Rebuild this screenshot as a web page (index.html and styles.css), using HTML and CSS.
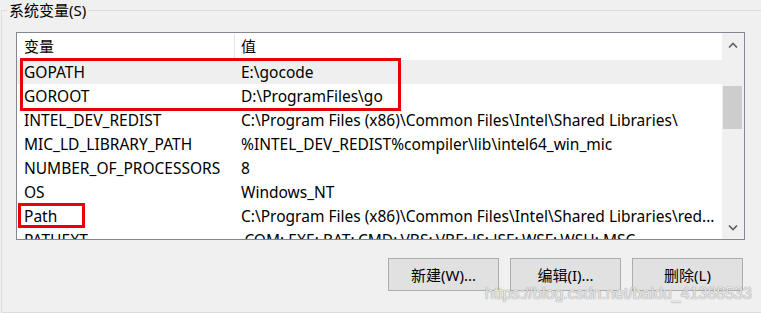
FILE: index.html
```html
<!DOCTYPE html>
<html lang="zh-CN">
<head>
    <meta charset="UTF-8">
    <meta name="viewport" content="width=device-width, initial-scale=1.0">
    <title>系统变量</title>
    <link rel="stylesheet" href="styles.css">
</head>
<body>
    <fieldset class="group">
        <legend>系统变量(S)</legend>

        <div class="listbox">
            <div class="list-main">
                <div class="row head">
                    <div class="cell name">变量</div>
                    <div class="cell value">值</div>
                </div>
                <div class="row selected">
                    <div class="cell name">GOPATH</div>
                    <div class="cell value">E:\gocode</div>
                </div>
                <div class="row">
                    <div class="cell name">GOROOT</div>
                    <div class="cell value">D:\ProgramFiles\go</div>
                </div>
                <div class="row">
                    <div class="cell name">INTEL_DEV_REDIST</div>
                    <div class="cell value">C:\Program Files (x86)\Common Files\Intel\Shared Libraries\</div>
                </div>
                <div class="row">
                    <div class="cell name">MIC_LD_LIBRARY_PATH</div>
                    <div class="cell value">%INTEL_DEV_REDIST%compiler\lib\intel64_win_mic</div>
                </div>
                <div class="row">
                    <div class="cell name">NUMBER_OF_PROCESSORS</div>
                    <div class="cell value">8</div>
                </div>
                <div class="row">
                    <div class="cell name">OS</div>
                    <div class="cell value">Windows_NT</div>
                </div>
                <div class="row">
                    <div class="cell name">Path</div>
                    <div class="cell value">C:\Program Files (x86)\Common Files\Intel\Shared Libraries\red...</div>
                </div>
                <div class="row">
                    <div class="cell name">PATHEXT</div>
                    <div class="cell value">.COM;.EXE;.BAT;.CMD;.VBS;.VBE;.JS;.JSE;.WSF;.WSH;.MSC</div>
                </div>
            </div>

            <div class="scrollbar">
                <div class="arrow">
                    <svg width="10" height="6" viewBox="0 0 10 6"><path d="M1 5.5 L5 1.5 L9 5.5" fill="none" stroke="#606060" stroke-width="1.6"/></svg>
                </div>
                <div class="track"><div class="thumb"></div></div>
                <div class="arrow">
                    <svg width="10" height="6" viewBox="0 0 10 6"><path d="M1 0.5 L5 4.5 L9 0.5" fill="none" stroke="#606060" stroke-width="1.6"/></svg>
                </div>
            </div>

            <div class="mark mark-go"></div>
            <div class="mark mark-path"></div>
        </div>

        <div class="buttons">
            <button>新建(W)...</button>
            <button>编辑(I)...</button>
            <button>删除(L)</button>
        </div>
    </fieldset>

    <div class="watermark">https://blog.csdn.net/baidu_41388533</div>
</body>
</html>
```

FILE: styles.css
```css
body {
    margin: 0;
    height: 313px;
    overflow: hidden;
    background: #f0f0f0;
    font-family: "Noto Sans", "Noto Sans CJK SC", sans-serif;
    font-size: 15px;
    color: #000;
    position: relative;
}
.group {
    margin: 0 -2px 0 1px;
    padding: 12px 17px 20px 14px;
    border: 1px solid #dcdcdc;
    height: 313px;
    box-sizing: border-box;
}
.group legend {
    margin-left: -9px;
    padding: 0 2px;
    line-height: 20px;
}
.listbox {
    position: relative;
    display: flex;
    height: 206px;
    border: 1px solid #828790;
    background: #fff;
}
.list-main {
    flex: 1;
    overflow: hidden;
    font-size: 15.5px;
}
.row {
    display: grid;
    grid-template-columns: 218px 1fr;
    height: 24px;
    line-height: 24px;
    white-space: nowrap;
}
.row.head {
    height: 24px;
    padding: 1px 0 2px;
    font-size: 15px;
}
.row.selected {
    background: #efefef;
}
.cell {
    overflow: hidden;
}
.cell.name {
    padding-left: 7px;
}
.cell.value {
    padding-left: 6px;
}
.head .cell.name {
    border-right: 1px solid #e5e5e5;
}
.scrollbar {
    width: 22px;
    background: #f0f0f0;
    display: flex;
    flex-direction: column;
}
.arrow {
    height: 24px;
    display: flex;
    align-items: center;
    justify-content: center;
}
.arrow:last-child {
    height: 23px;
}
.track {
    flex: 1;
    padding: 29px 2px 0 1px;
}
.thumb {
    height: 43px;
    background: #cdcdcd;
}
.mark {
    position: absolute;
    border: 3px solid #e8000b;
    box-sizing: border-box;
}
.mark-go {
    left: 3px;
    top: 25px;
    width: 381px;
    height: 53px;
}
.mark-path {
    left: 1px;
    top: 170px;
    width: 67px;
    height: 25px;
}
.buttons {
    display: flex;
    justify-content: flex-end;
    gap: 11px;
    margin: 18px 2px 0 0;
}
.buttons button {
    width: 111px;
    height: 33px;
    background: #e1e1e1;
    border: 1px solid #adadad;
    font-family: "Noto Sans", "Noto Sans CJK SC", sans-serif;
    font-size: 15px;
    color: #000;
    padding: 0;
}
.watermark {
    position: absolute;
    left: 485px;
    top: 285px;
    font-family: "Liberation Sans", sans-serif;
    font-size: 16px;
    color: rgba(255, 255, 255, 0.75);
    text-shadow: 0 0 1px #999, 0 0 1px #999;
}
```
